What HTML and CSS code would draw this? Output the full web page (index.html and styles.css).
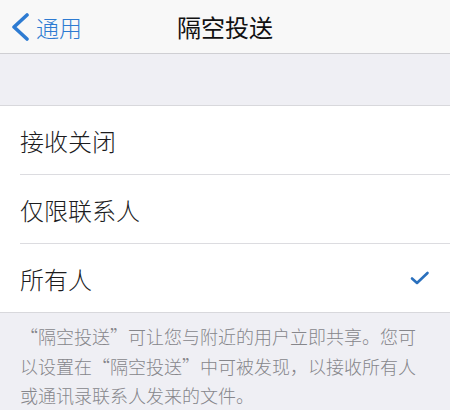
FILE: index.html
```html
<!DOCTYPE html>
<html lang="zh-CN">

<head>
    <meta charset="UTF-8">
    <meta name="viewport" content="width=device-width, initial-scale=1.0">
    <title>隔空投送</title>
    <link rel="stylesheet" href="styles.css">
</head>

<body>
    <div class="nav">
        <div class="nav_back">
            <svg class="chevron" width="20" height="28" viewBox="0 0 20 28">
                <path d="M17 2 L4 14 L17 26" fill="none" stroke="#2d7bd2" stroke-width="3.6" stroke-linecap="round" stroke-linejoin="round" />
            </svg>
            <span>通用</span>
        </div>
        <div class="nav_title">隔空投送</div>
        <div></div>
    </div>

    <div class="gap"></div>

    <!-- 선택 목록 -->
    <ul class="list">
        <li class="list_item">接收关闭</li>
        <li class="list_item">仅限联系人</li>
        <li class="list_item">
            <span>所有人</span>
            <svg class="check" width="20" height="16" viewBox="0 0 20 16">
                <path d="M2 8.5 L7 13 L17.5 3" fill="none" stroke="#2a70bd" stroke-width="2.6" stroke-linecap="round" stroke-linejoin="round" />
            </svg>
        </li>
    </ul>

    <div class="footer">
        “隔空投送”可让您与附近的用户立即共享。您可以设置在“隔空投送”中可被发现，以接收所有人或通讯录联系人发来的文件。
    </div>
</body>

</html>
```

FILE: styles.css
```css
body {
    margin: 0;
    background-color: #efeff4;
    font-family: "Noto Sans CJK SC", "Noto Sans", sans-serif;
    font-weight: 300;
    color: #1c1c1e;
}

/* 상단 바 */
.nav {
    height: 53px;
    display: grid;
    grid-template-columns: 1fr auto 1fr;
    align-items: center;

    background-color: #f8f8f8;
    border-bottom: 1px solid #cfcfd3;
}

.nav_back {
    display: flex;
    align-items: center;
    gap: 6px;

    padding-left: 10px;
    color: #2d7bd2;
    font-size: 23px;
}

.nav_title {
    font-size: 24px;
    font-weight: 400;
    color: #111;
}

.gap {
    height: 51px;
}

/* 목록 */
.list {
    margin: 0;
    padding: 0 0 0 20px;
    list-style: none;

    background-color: #fff;
    border-top: 1px solid #d8d8dc;
    border-bottom: 1px solid #d8d8dc;
}

.list_item {
    height: 68px;
    display: flex;
    align-items: center;
    justify-content: space-between;

    padding-right: 20px;
    font-size: 24px;
    border-bottom: 1px solid #dcdce0;
}

.list_item:last-child {
    border-bottom: none;
}

.footer {
    padding: 9px 20px 0 20px;

    font-size: 18px;
    line-height: 29.5px;
    color: #86868b;
}
```
